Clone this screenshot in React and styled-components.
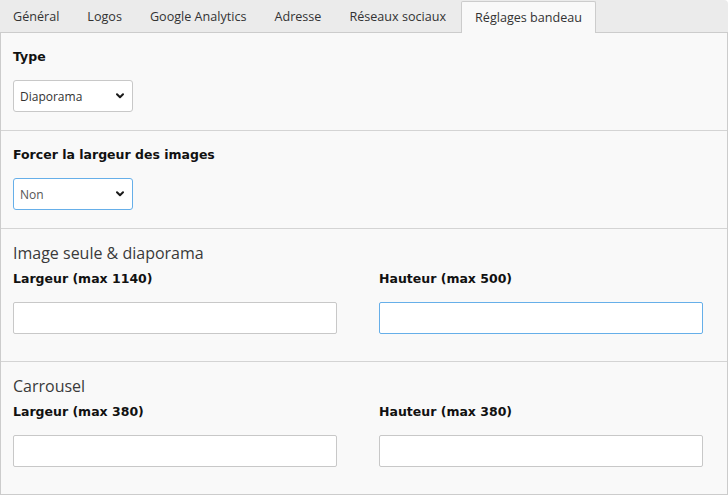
import React from 'react'
import styled, { createGlobalStyle } from 'styled-components'

const Global = createGlobalStyle`
  html, body { margin: 0; padding: 0; background: #fff; }
  body { font-family: "Open Sans", "DejaVu Sans", sans-serif; color: #333; }
  * { box-sizing: border-box; }
`

const tabs = ['Général', 'Logos', 'Google Analytics', 'Adresse', 'Réseaux sociaux', 'Réglages bandeau']

const Chevron = () => (
  <svg width="8" height="6" viewBox="0 0 8 6">
    <path d="M1 1.2 L4 4.2 L7 1.2" fill="none" stroke="#1a1a1a" strokeWidth="2" strokeLinecap="round" strokeLinejoin="round" />
  </svg>
)

function App() {
  return (
    <Page>
      <Global />
      <TabBar>
        {tabs.map((t, i) => (
          <Tab key={t} active={i === tabs.length - 1}>{t}</Tab>
        ))}
      </TabBar>
      <Panel>
        <Section>
          <Label>Type</Label>
          <Select>
            <span>Diaporama</span>
            <Chevron />
          </Select>
        </Section>
        <Section>
          <Label>Forcer la largeur des images</Label>
          <Select focused muted>
            <span>Non</span>
            <Chevron />
          </Select>
        </Section>
        <Section tall>
          <Heading>Image seule &amp; diaporama</Heading>
          <Row>
            <Field>
              <Label>Largeur (max 1140)</Label>
              <Input />
            </Field>
            <Field>
              <Label>Hauteur (max 500)</Label>
              <Input focused />
            </Field>
          </Row>
        </Section>
        <Section tall last>
          <Heading>Carrousel</Heading>
          <Row>
            <Field>
              <Label>Largeur (max 380)</Label>
              <Input />
            </Field>
            <Field>
              <Label>Hauteur (max 380)</Label>
              <Input />
            </Field>
          </Row>
        </Section>
      </Panel>
    </Page>
  )
}

const Page = styled.div`
  width: 728px;
  height: 495px;
  overflow: hidden;
`
const TabBar = styled.div`
  display: flex;
  align-items: flex-end;
  height: 33px;
  margin-left: -1px;
  background: #ebebeb;
  border-top-right-radius: 4px;
  border-bottom: 1px solid #cccccc;
`
const Tab = styled.div`
  height: 32px;
  padding: 0 ${p => (p.active ? '13px' : '14px')};
  margin-left: ${p => (p.active ? '1px' : '0')};
  margin-bottom: ${p => (p.active ? '-1px' : '0')};
  display: flex;
  align-items: center;
  font-size: 12.6px;
  color: #333;
  background: ${p => (p.active ? '#f9f9f9' : 'transparent')};
  border: ${p => (p.active ? '1px solid #cccccc' : 'none')};
  border-bottom: none;
  border-radius: 2px 2px 0 0;
`
const Panel = styled.div`
  background: #f9f9f9;
  border-left: 1px solid #cccccc;
  border-right: 1px solid #cccccc;
  border-bottom: 1px solid #cccccc;
  height: 462px;
`
const Section = styled.div`
  padding: ${p => (p.tall ? '14px' : '16px')} 12px ${p => (p.tall ? '27px' : '18px')};
  border-bottom: ${p => (p.last ? 'none' : '1px solid #d4d4d4')};
`
const Heading = styled.div`
  font-size: 16px;
  color: #3a3a3a;
  line-height: 20px;
  margin-bottom: 8px;
`
const Label = styled.div`
  font-family: "DejaVu Sans", Verdana, sans-serif;
  font-weight: bold;
  font-size: 12.5px;
  color: #111;
  line-height: 16px;
  margin-bottom: 15px;
`
const Select = styled.div`
  width: 120px;
  height: 32px;
  display: flex;
  align-items: center;
  justify-content: space-between;
  padding: 0 8px 0 6px;
  background: #fff;
  border: 1px solid ${p => (p.focused ? '#66afe9' : '#c8c8c8')};
  border-radius: 3px;
  font-size: 12px;
  color: ${p => (p.muted ? '#555' : '#333')};
`
const Row = styled.div`
  display: grid;
  grid-template-columns: 324px 324px;
  column-gap: 42px;
`
const Field = styled.div`
  display: flex;
  flex-direction: column;
`
const Input = styled.div`
  height: 32px;
  background: #fff;
  border: 1px solid ${p => (p.focused ? '#66afe9' : '#c8c8c8')};
  border-radius: 2px;
`

export default App
